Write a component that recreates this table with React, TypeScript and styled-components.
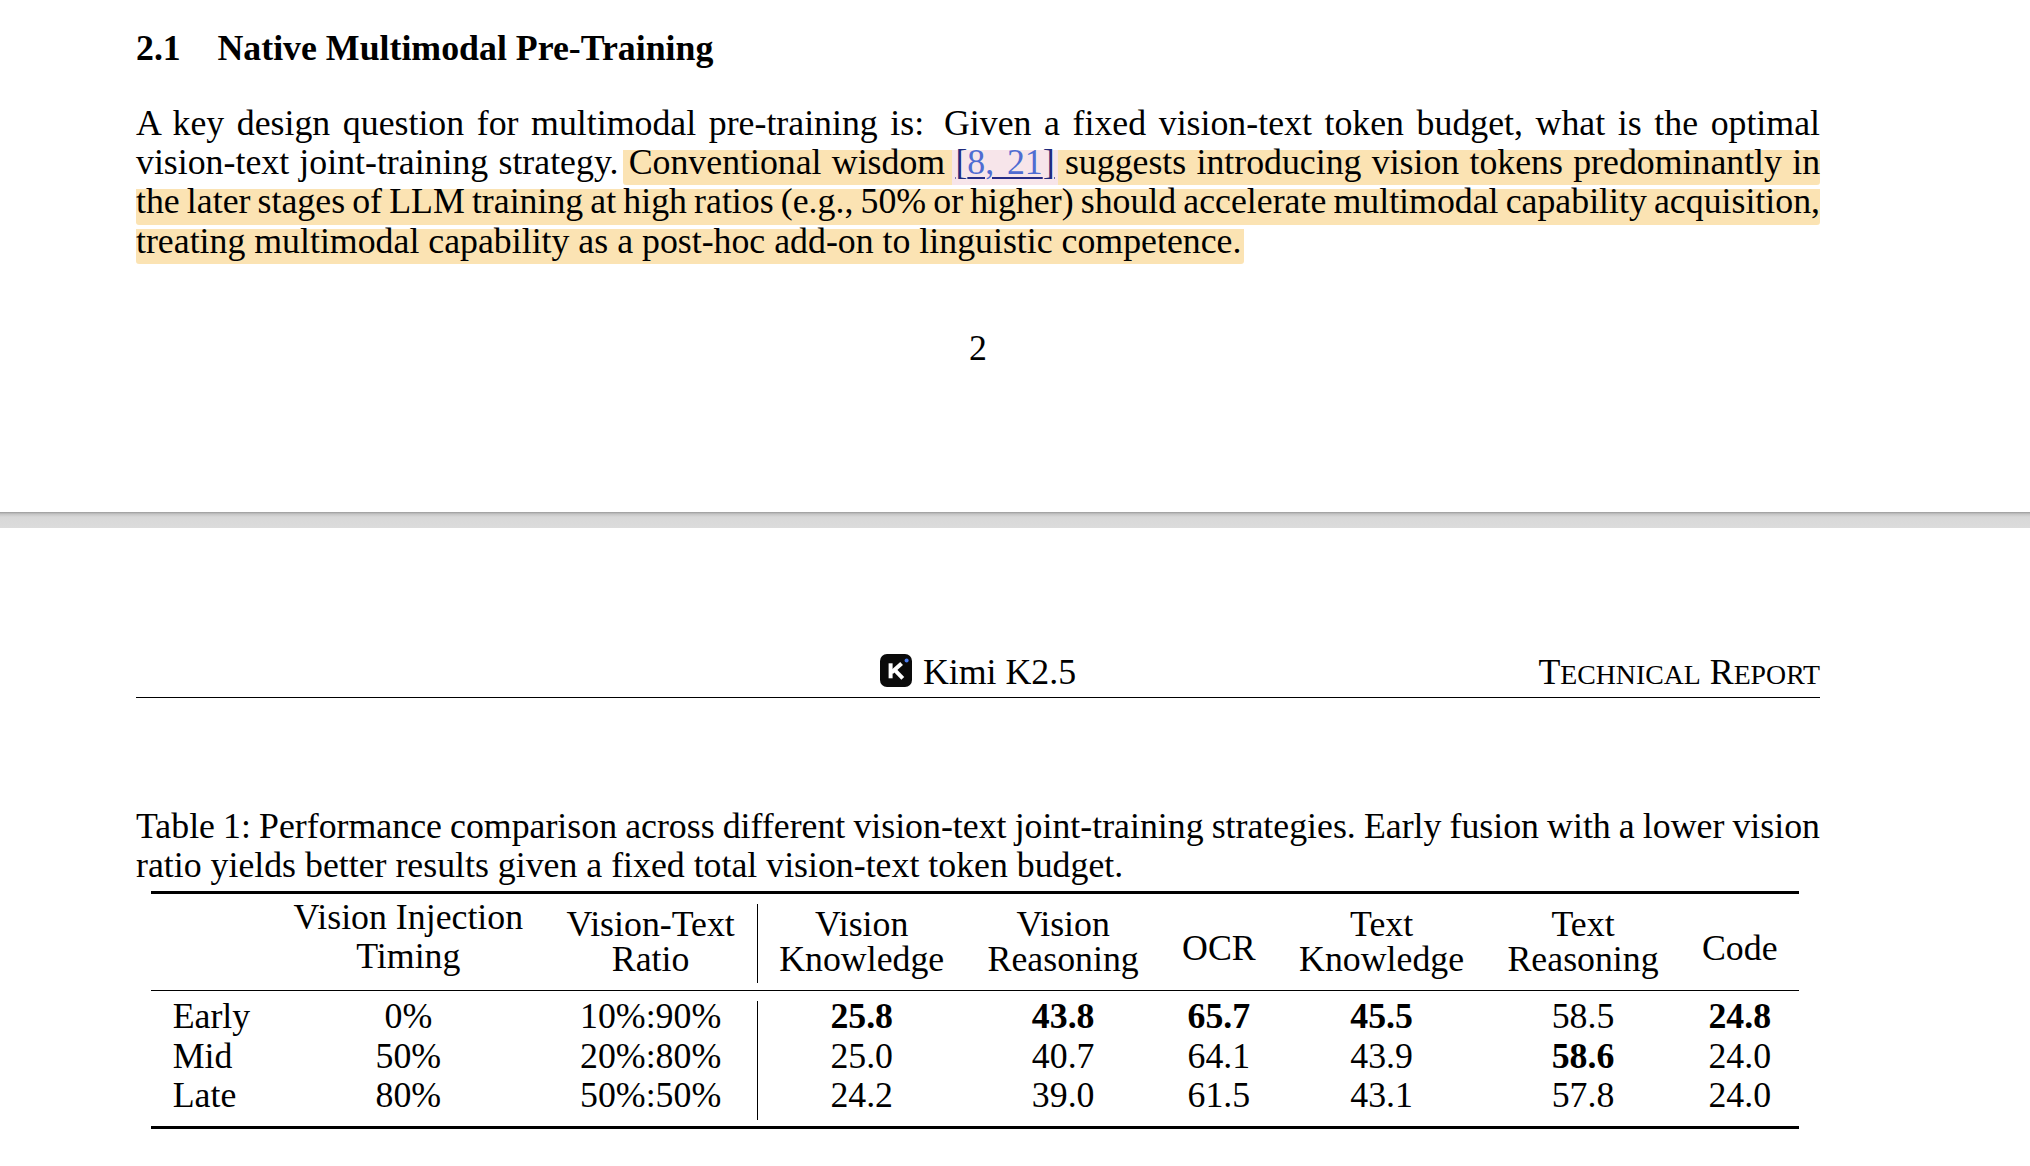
import React from "react";
import styled, { createGlobalStyle } from "styled-components";

const GlobalStyle = createGlobalStyle`
  html, body {
    margin: 0;
    padding: 0;
    background: #fff;
  }
  body {
    font-family: "Liberation Serif", "Times New Roman", serif;
    color: #000;
  }
`;

const Page = styled.section<{ $top: number; $minH?: number }>`
  box-sizing: border-box;
  width: 2030px;
  padding: ${(p) => p.$top}px 210px 0 136px;
  min-height: ${(p) => (p.$minH ? `${p.$minH}px` : "auto")};
  font-size: 35.8px;
  line-height: 39.3px;
`;

const SectionTitle = styled.h2`
  margin: 0;
  font-size: inherit;
  line-height: inherit;
  font-weight: bold;
`;

const SectionNum = styled.span`
  display: inline-block;
  width: 81.5px;
`;

const Paragraph = styled.div<{ $mt: number }>`
  margin-top: ${(p) => p.$mt}px;
`;

const Line = styled.div<{ $full?: boolean }>`
  text-align: ${(p) => (p.$full ? "justify" : "left")};
  text-align-last: ${(p) => (p.$full ? "justify" : "left")};
  word-spacing: ${(p) => (p.$full ? "-2.5px" : "0")};
`;

const Mark = styled.span<{ $padL?: number; $padR?: number }>`
  background: linear-gradient(to bottom, transparent 7.6px, #fbe3b3 7.6px);
  padding: 0 ${(p) => p.$padR ?? 0}px 3.3px ${(p) => p.$padL ?? 0}px;
  margin-left: ${(p) => -(p.$padL ?? 0)}px;
  border-radius: 0 0 3px 3px;
`;

const Cite = styled.span`
  background: linear-gradient(to bottom, transparent 7.6px, #f7e5ea 7.6px);
  padding: 0 3px 3.3px;
  margin: 0 -3px;
  color: #4f6cd2;
  text-decoration: underline;
  text-decoration-color: #262c86;
  text-decoration-thickness: 1.5px;
  text-underline-offset: 3px;
  word-spacing: 0;
`;

const Bracket = styled.span`
  color: #1f2a7c;
`;

const PageNumber = styled.div`
  margin-top: 68.3px;
  text-align: center;
`;

const PageGap = styled.div`
  height: 16px;
  background: linear-gradient(
    to bottom,
    #9a9a9a 0,
    #c4c4c4 2px,
    #d8d8d8 5px,
    #dcdcdc 100%
  );
`;

const RunningHead = styled.header`
  display: grid;
  grid-template-columns: 1fr auto 1fr;
  align-items: start;
  padding-bottom: 4.8px;
  border-bottom: 1.4px solid #000;
`;

const Brand = styled.div`
  grid-column: 2;
  white-space: nowrap;
`;

const BrandLogo = styled.svg`
  vertical-align: -3.5px;
  margin-right: 11px;
`;

const ReportTag = styled.div`
  grid-column: 3;
  justify-self: end;
  white-space: nowrap;
`;

const SmallCap = styled.span`
  font-size: 27.8px;
  line-height: 1;
`;

const Caption = styled.div`
  margin-top: 109px;
`;

const Table = styled.table`
  margin: 5px 0 0 15px;
  border-collapse: separate;
  border-spacing: 0;
  font-size: 35.8px;
`;

const RuleCell = styled.td<{ $h: number }>`
  height: ${(p) => p.$h}px;
  padding: 0;
  background: #000;
  font-size: 0;
  line-height: 0;
`;

const GapCell = styled.td<{ $h: number }>`
  height: ${(p) => p.$h}px;
  padding: 0;
  font-size: 0;
  line-height: 0;
`;

const HeadRow = styled.tr`
  height: 79px;
`;

const HeadCell = styled.th<{ $pt: number; $lh: number; $sep?: boolean }>`
  vertical-align: top;
  padding: ${(p) => p.$pt}px 21.7px 0;
  line-height: ${(p) => p.$lh}px;
  font-weight: normal;
  text-align: center;
  white-space: nowrap;
  border-right: ${(p) => (p.$sep ? "1.3px solid #000" : "none")};
`;

const Lift = styled.div`
  margin-top: -6px;
`;

const BodyCell = styled.td<{ $left?: boolean; $sep?: boolean; $bold?: boolean }>`
  vertical-align: top;
  padding: 0 21.7px 9.5px;
  line-height: 30px;
  white-space: nowrap;
  text-align: ${(p) => (p.$left ? "left" : "center")};
  font-weight: ${(p) => (p.$bold ? "bold" : "normal")};
  border-right: ${(p) => (p.$sep ? "1.3px solid #000" : "none")};
`;

type Row = {
  label: string;
  timing: string;
  ratio: string;
  values: [string, boolean][];
};

const rows: Row[] = [
  {
    label: "Early",
    timing: "0%",
    ratio: "10%:90%",
    values: [
      ["25.8", true],
      ["43.8", true],
      ["65.7", true],
      ["45.5", true],
      ["58.5", false],
      ["24.8", true],
    ],
  },
  {
    label: "Mid",
    timing: "50%",
    ratio: "20%:80%",
    values: [
      ["25.0", false],
      ["40.7", false],
      ["64.1", false],
      ["43.9", false],
      ["58.6", true],
      ["24.0", false],
    ],
  },
  {
    label: "Late",
    timing: "80%",
    ratio: "50%:50%",
    values: [
      ["24.2", false],
      ["39.0", false],
      ["61.5", false],
      ["43.1", false],
      ["57.8", false],
      ["24.0", false],
    ],
  },
];

const KimiLogo = () => (
  <BrandLogo width="32" height="33" viewBox="0 0 32 33">
    <rect x="0" y="0" width="32" height="33" rx="7" fill="#0a0a0a" />
    <path d="M10.6 9.3V24.3" stroke="#fff" strokeWidth="4" fill="none" />
    <path d="M11.5 18.6L21.6 9.6" stroke="#fff" strokeWidth="4" fill="none" />
    <path d="M14.6 15.9L22.8 24.3" stroke="#fff" strokeWidth="4" fill="none" />
    <circle cx="26.6" cy="6.6" r="2" fill="#4a7cf2" />
  </BrandLogo>
);

const App = () => {
  return (
    <>
      <GlobalStyle />
      <Page $top={29.3} $minH={512}>
        <SectionTitle>
          <SectionNum>2.1</SectionNum>Native Multimodal Pre-Training
        </SectionTitle>
        <Paragraph $mt={35.2}>
          <Line $full>
            A key design question for multimodal pre-training is:{"\u2009"} Given a fixed
            vision-text token budget, what is the optimal
          </Line>
          <Line $full>
            vision-text joint-training strategy.{" "}
            <Mark $padL={6}>
              Conventional wisdom{" "}
              <Cite>
                <Bracket>[</Bracket>8, 21<Bracket>]</Bracket>
              </Cite>{" "}
              suggests introducing vision tokens predominantly in
            </Mark>
          </Line>
          <Line $full>
            <Mark>
              the later stages of LLM training at high ratios (e.g., 50% or higher) should
              accelerate multimodal capability acquisition,
            </Mark>
          </Line>
          <Line>
            <Mark $padR={3}>
              treating multimodal capability as a post-hoc add-on to linguistic competence.
            </Mark>
          </Line>
        </Paragraph>
        <PageNumber>2</PageNumber>
      </Page>
      <PageGap />
      <Page $top={124.9}>
        <RunningHead>
          <Brand>
            <KimiLogo />
            Kimi K2.5
          </Brand>
          <ReportTag>
            T<SmallCap>ECHNICAL</SmallCap> R<SmallCap>EPORT</SmallCap>
          </ReportTag>
        </RunningHead>
        <Caption>
          <Line $full>
            Table 1: Performance comparison across different vision-text joint-training
            strategies. Early fusion with a lower vision
          </Line>
          <Line>ratio yields better results given a fixed total vision-text token budget.</Line>
        </Caption>
        <Table>
          <tbody>
            <tr>
              <RuleCell colSpan={9} $h={3} />
            </tr>
            <tr>
              <GapCell colSpan={9} $h={10} />
            </tr>
            <HeadRow>
              <HeadCell $pt={3.8} $lh={34.5}></HeadCell>
              <HeadCell $pt={0} $lh={39}>
                <Lift>
                  Vision Injection
                  <br />
                  Timing
                </Lift>
              </HeadCell>
              <HeadCell $pt={3.8} $lh={34.5} $sep>
                Vision-Text
                <br />
                Ratio
              </HeadCell>
              <HeadCell $pt={3.8} $lh={34.5}>
                Vision
                <br />
                Knowledge
              </HeadCell>
              <HeadCell $pt={3.8} $lh={34.5}>
                Vision
                <br />
                Reasoning
              </HeadCell>
              <HeadCell $pt={27.8} $lh={34.5}>
                OCR
              </HeadCell>
              <HeadCell $pt={3.8} $lh={34.5}>
                Text
                <br />
                Knowledge
              </HeadCell>
              <HeadCell $pt={3.8} $lh={34.5}>
                Text
                <br />
                Reasoning
              </HeadCell>
              <HeadCell $pt={27.8} $lh={34.5}>
                Code
              </HeadCell>
            </HeadRow>
            <tr>
              <GapCell colSpan={9} $h={7} />
            </tr>
            <tr>
              <RuleCell colSpan={9} $h={1.8} />
            </tr>
            <tr>
              <GapCell colSpan={9} $h={10} />
            </tr>
            {rows.map((row) => (
              <tr key={row.label}>
                <BodyCell $left>{row.label}</BodyCell>
                <BodyCell>{row.timing}</BodyCell>
                <BodyCell $sep>{row.ratio}</BodyCell>
                {row.values.map(([v, bold], i) => (
                  <BodyCell key={i} $bold={bold}>
                    {v}
                  </BodyCell>
                ))}
              </tr>
            ))}
            <tr>
              <GapCell colSpan={9} $h={6} />
            </tr>
            <tr>
              <RuleCell colSpan={9} $h={3} />
            </tr>
          </tbody>
        </Table>
      </Page>
    </>
  );
};

export default App;
